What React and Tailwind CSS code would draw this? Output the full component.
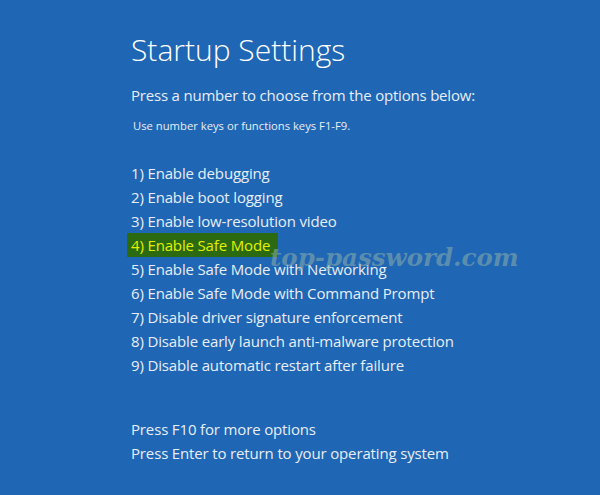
import React from 'react';

const OPTIONS = [
  '1) Enable debugging',
  '2) Enable boot logging',
  '3) Enable low-resolution video',
  '4) Enable Safe Mode',
  '5) Enable Safe Mode with Networking',
  '6) Enable Safe Mode with Command Prompt',
  '7) Disable driver signature enforcement',
  '8) Disable early launch anti-malware protection',
  '9) Disable automatic restart after failure',
];

const App = () => {
  return (
    <div
      className="w-[600px] h-[495px] bg-[#1f66b4] text-[#e8eef7] overflow-hidden relative"
      style={{ fontFamily: '"Open Sans", "Noto Sans", sans-serif' }}
    >
      <div className="pl-[131px] pt-[30px]">
        <h1 className="text-[30px] font-light leading-[40px] text-white">Startup Settings</h1>
        <p className="mt-[14px] text-[15px] leading-[22px] tracking-[-0.2px]">Press a number to choose from the options below:</p>
        <p className="mt-[12px] text-[11.25px] leading-[16px] pl-[2px]">Use number keys or functions keys F1-F9.</p>

        <ul className="mt-[27px] text-[15px] leading-[24px] tracking-[-0.15px]">
          {OPTIONS.map((o, i) => (
            <li key={o} className="flex">
              {i === 3 ? (
                <span className="-ml-[4px] pl-[4px] pr-[8px] bg-[#2b6a10] text-[#e4f000]">{o}</span>
              ) : (
                <span>{o}</span>
              )}
            </li>
          ))}
        </ul>

        <div className="mt-[40px] text-[15px] leading-[24px] tracking-[-0.15px]">
          <p>Press F10 for more options</p>
          <p>Press Enter to return to your operating system</p>
        </div>
      </div>

      {/* watermark sits over the list */}
      <div
        className="absolute left-[270px] top-[246px] whitespace-nowrap text-[24.5px] font-bold italic text-[#8fb0aa]/55 leading-none"
        style={{ fontFamily: '"DejaVu Serif", serif' }}
      >
        top-password.com
      </div>
    </div>
  );
};

export default App;
